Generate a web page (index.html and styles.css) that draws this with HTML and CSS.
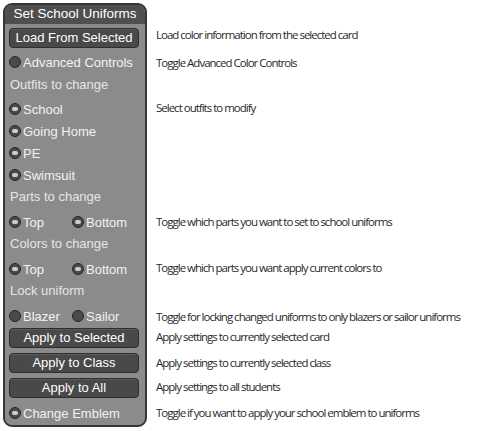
FILE: index.html
```html
<!DOCTYPE html>
<html>
<head>
<meta charset="utf-8">
<link rel="stylesheet" href="styles.css">
</head>
<body>
<div class="page">
  <div class="panel">
    <div class="title">Set School Uniforms</div>
    <div class="body">
      <div class="btn first">Load From Selected</div>
      <div class="row r-adv"><span class="tg off"></span>Advanced Controls</div>
      <div class="label l-first">Outfits to change</div>
      <div class="row"><span class="tg on"></span>School</div>
      <div class="row"><span class="tg on"></span>Going Home</div>
      <div class="row"><span class="tg on"></span>PE</div>
      <div class="row"><span class="tg on"></span>Swimsuit</div>
      <div class="label">Parts to change</div>
      <div class="row pair"><span class="cell"><span class="tg on"></span>Top</span><span class="cell"><span class="tg on"></span>Bottom</span></div>
      <div class="label">Colors to change</div>
      <div class="row pair"><span class="cell"><span class="tg on"></span>Top</span><span class="cell"><span class="tg on"></span>Bottom</span></div>
      <div class="label">Lock uniform</div>
      <div class="row pair"><span class="cell"><span class="tg off"></span>Blazer</span><span class="cell"><span class="tg off"></span>Sailor</span></div>
      <div class="btn b-sel">Apply to Selected</div>
      <div class="btn">Apply to Class</div>
      <div class="btn">Apply to All</div>
      <div class="row r-emb"><span class="tg on"></span>Change Emblem</div>
    </div>
  </div>
  <div class="help">
    <div class="d d1">Load color information from the selected card</div>
    <div class="d d2">Toggle Advanced Color Controls</div>
    <div class="d d3">Select outfits to modify</div>
    <div class="d d4">Toggle which parts you want to set to school uniforms</div>
    <div class="d d5">Toggle which parts you want apply current colors to</div>
    <div class="d d6">Toggle for locking changed uniforms to only blazers or sailor uniforms</div>
    <div class="d d7">Apply settings to currently selected card</div>
    <div class="d d8">Apply settings to currently selected class</div>
    <div class="d d9">Apply settings to all students</div>
    <div class="d d10">Toggle if you want to apply your school emblem to uniforms</div>
  </div>
</div>
</body>
</html>
```
FILE: styles.css
```css
html, body { margin: 0; padding: 0; background: #ffffff; }
.page { display: flex; padding: 3px 0 0 3px; }
.panel {
  width: 140px;
  height: 420px;
  border: 2px solid #363636;
  border-radius: 9px;
  background: #8b8b8b;
  overflow: hidden;
  font-family: "Liberation Sans", Arial, sans-serif;
  font-size: 13px;
  color: #f2f2f2;
  display: flex;
  flex-direction: column;
}
.title {
  height: 19px;
  line-height: 18px;
  background: #4f4f4f;
  text-align: center;
  font-size: 13.5px;
  color: #ffffff;
}
.body { display: flex; flex-direction: column; padding: 0 6px 0 4px; }
.btn {
  height: 18px;
  line-height: 18px;
  border: 1px solid #2e2e2e;
  border-radius: 4px;
  background: #494949;
  box-shadow: inset 0 1px 0 #5a5a5a;
  text-align: center;
  color: #ffffff;
  margin-top: 5px;
  font-size: 13px;
}
.btn.first { margin-top: 4px; }
.btn.b-sel { margin-top: 1px; }
.row { height: 22px; display: flex; align-items: center; }
.r-adv { margin-top: 3px; }
.r-emb { margin-top: 4px; }
.label { height: 22px; line-height: 22px; color: #e6e6e6; padding-left: 1px; margin-bottom: 3px; }
.label.l-first { margin-top: 1px; margin-bottom: 2px; }
.pair .cell { display: flex; align-items: center; width: 63px; }
.tg {
  width: 10px; height: 10px;
  border-radius: 50%;
  background: #4a4a4a;
  border: 1px solid #262626;
  margin-right: 2px;
  position: relative;
  flex: none;
}
.tg.on::after {
  content: "";
  position: absolute;
  left: 2px; top: 3px;
  width: 6px; height: 4px;
  border-radius: 2px;
  background: #cdcdcd;
}
.help {
  margin-left: 9px;
  font-family: "Open Sans", sans-serif;
  font-size: 11.5px;
  letter-spacing: -1px;
  color: #2a2a2a;
  display: flex;
  flex-direction: column;
}
.d { height: 14px; line-height: 14px; white-space: nowrap; }
.d1 { margin-top: 25px; }
.d2 { margin-top: 14px; }
.d3 { margin-top: 31px; }
.d4 { margin-top: 100px; }
.d5 { margin-top: 32px; }
.d6 { margin-top: 35px; }
.d7 { margin-top: 6px; }
.d8 { margin-top: 12px; }
.d9 { margin-top: 10px; }
.d10 { margin-top: 12px; }
```
